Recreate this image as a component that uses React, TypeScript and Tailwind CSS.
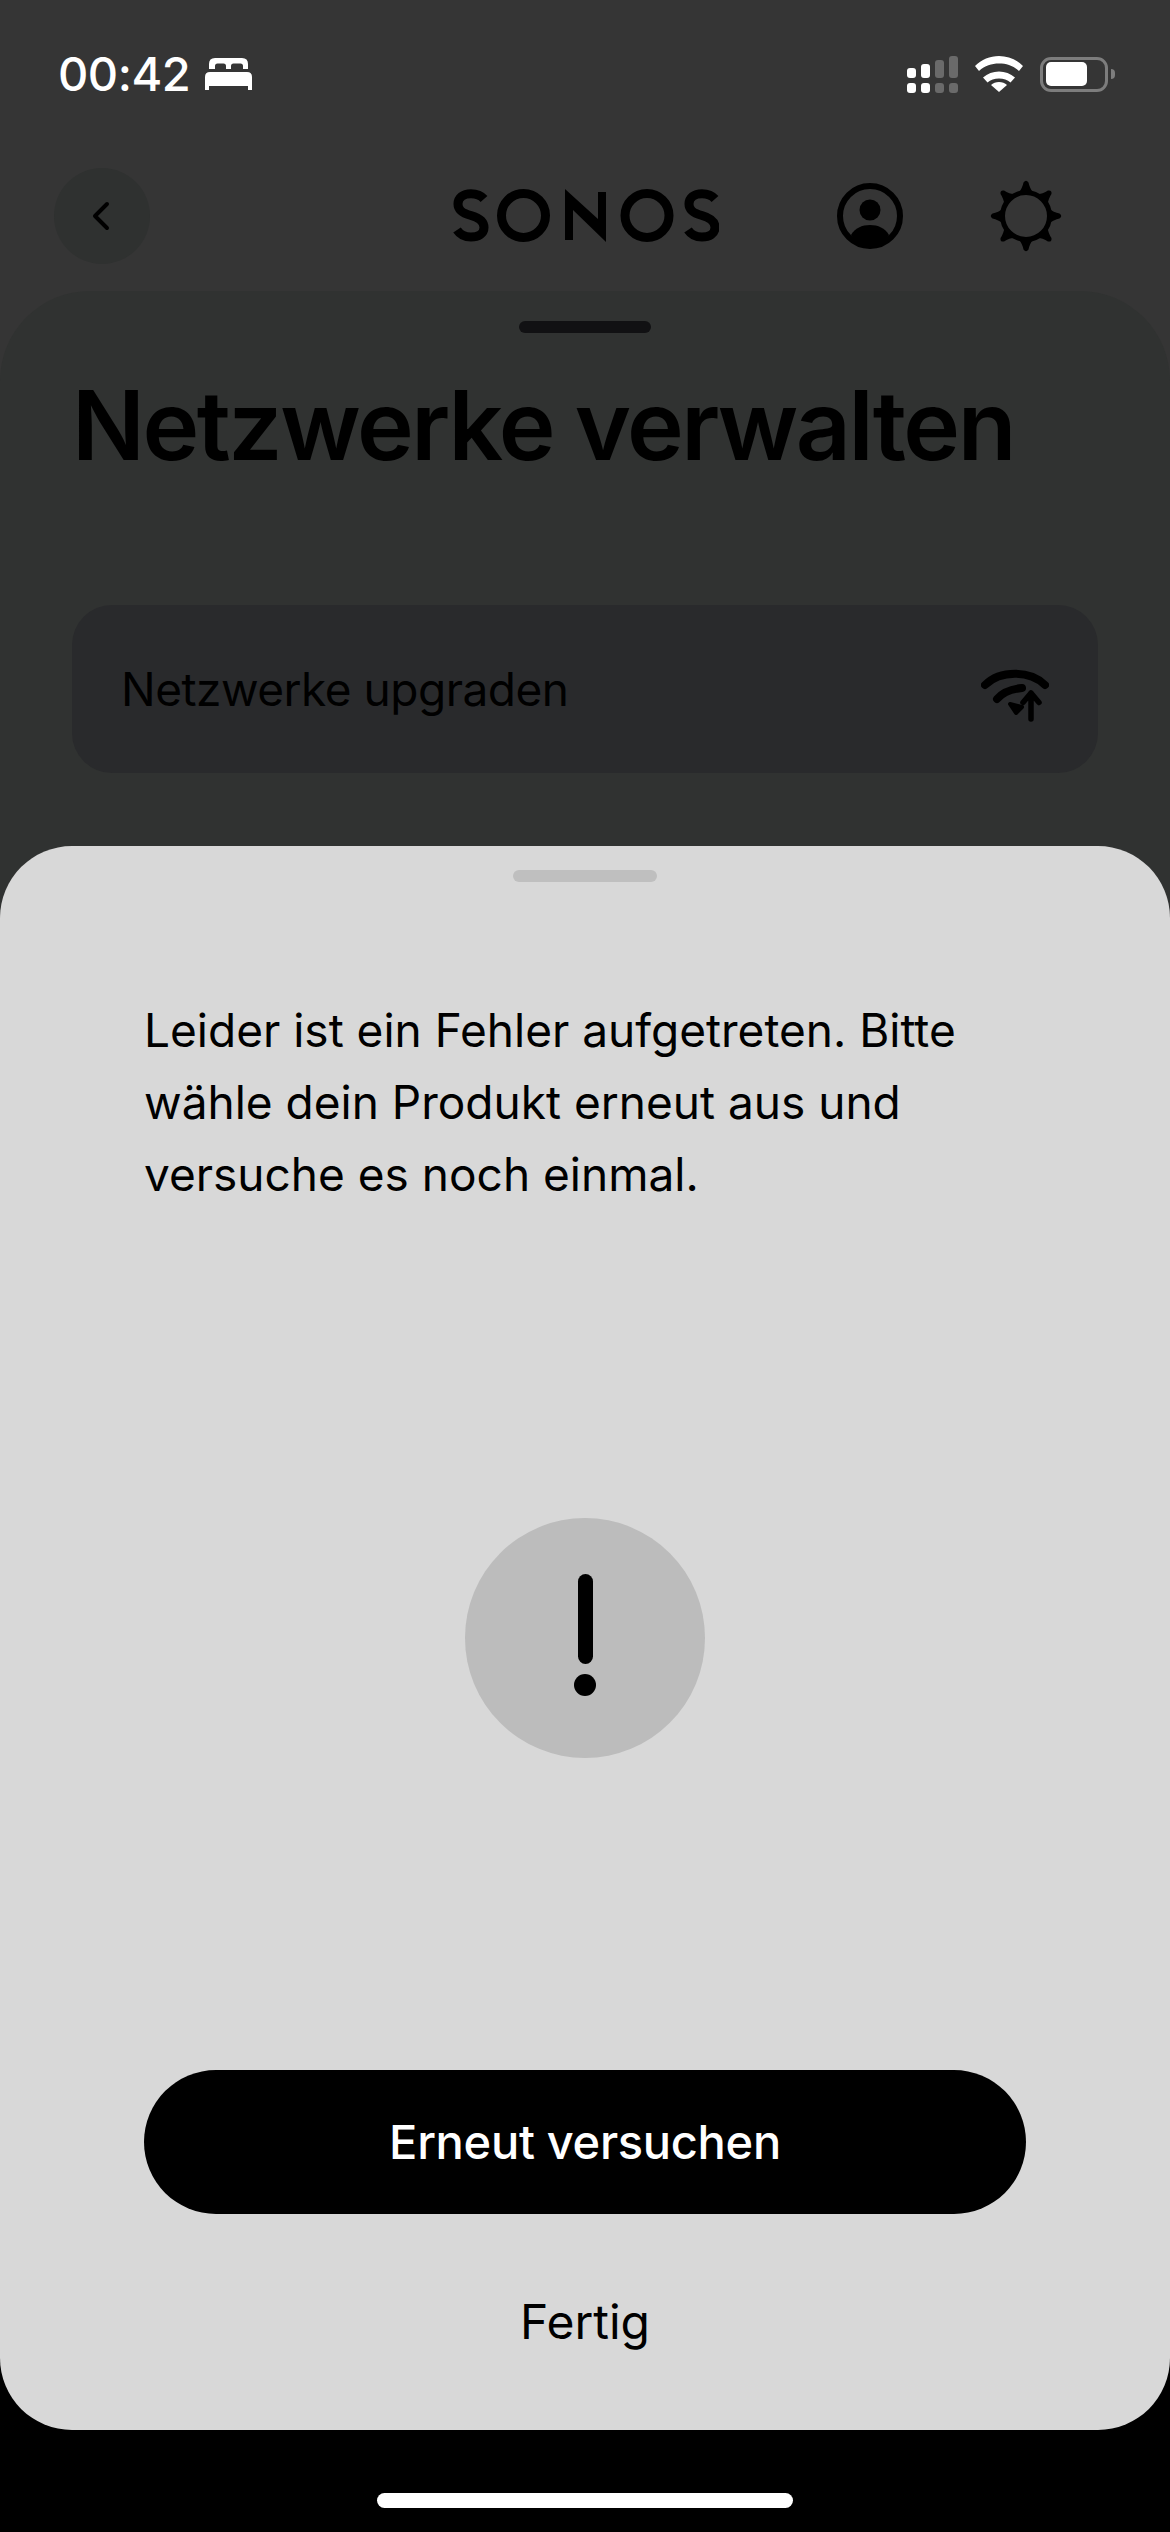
const sans = "font-['Inter',sans-serif]";

function Bed() {
  return (
    <svg width="47" height="32" viewBox="0 0 47 32" fill="#fff">
      <path d="M4 11V6q0-6 6-6h27q6 0 6 6v5h-5V8q0-2.500-2.500-2.500H28.500Q26 5.500 26 8v3h-5V8q0-2.500-2.500-2.500H12.500Q10 5.500 10 8v3z" />
      <path d="M5 14h37q5 0 5 5v13h-4v-4H4v4H0V19q0-5 5-5z" />
    </svg>
  );
}

function Signal() {
  const on = "#fff";
  const off = "#6a6a6a";
  return (
    <svg width="51" height="37" viewBox="0 0 51 37">
      <rect x="0" y="12" width="9" height="10" rx="3" fill={on} />
      <rect x="14" y="8" width="9" height="14" rx="3" fill={on} />
      <rect x="28" y="4" width="9" height="18" rx="3" fill={off} />
      <rect x="42" y="0" width="9" height="22" rx="3" fill={off} />
      <rect x="0" y="27" width="9" height="10" rx="3" fill={on} />
      <rect x="14" y="27" width="9" height="10" rx="3" fill={on} />
      <rect x="28" y="27" width="9" height="10" rx="3" fill={off} />
      <rect x="42" y="27" width="9" height="10" rx="3" fill={off} />
    </svg>
  );
}

function Wifi() {
  return (
    <svg width="48" height="36" viewBox="0 0 48 36" fill="#fff">
      <path d="M24 0C33 0 41.500 3.500 48 10L44 15C38 9.500 31.500 7.500 24 7.500S10 9.500 4 15L0 10C6.500 3.500 15 0 24 0z" />
      <path d="M24 15.500C30 15.500 35.500 17.500 40 21.500L35.500 26.500C32.500 24 28.500 22.500 24 22.500S15.500 24 12.500 26.500L8 21.500C12.500 17.500 18 15.500 24 15.500z" />
      <path d="M24 26C27 26 30 27 32 29L24 36L16 29C18 27 21 26 24 26z" />
    </svg>
  );
}

function Battery() {
  return (
    <div className="flex items-center gap-[3px]">
      <div className="flex h-[35px] w-[68px] items-center rounded-[11px] border-[3px] border-[#7d7d7d] px-[3px]">
        <div className="h-[24px] w-[41px] rounded-[5px] bg-white" />
      </div>
      <div className="h-[10px] w-[4px] rounded-r-[4px] bg-[#7d7d7d]" />
    </div>
  );
}

function Logo() {
  const s = "M33 10C30 6.500 25 4.700 20 4.700C12 4.700 7 9 7 15C7 21 11 24 20 26.500C29 29 33 32.500 33 38.500C33 44.500 27.500 48 20 48C14 48 9 45.500 6 41";
  return (
    <svg width="268" height="54" viewBox="0 0 268 54" fill="none" stroke="#000" strokeWidth="9">
      <path d={s} />
      <circle cx="72.500" cy="26.500" r="22" />
      <path d="M114 0L147 30V3H155V53L122 21V51H114Z" fill="#000" stroke="none" />
      <circle cx="196" cy="26.500" r="22" />
      <path d={s} transform="translate(231 0)" />
    </svg>
  );
}

function Profile() {
  return (
    <svg width="66" height="66" viewBox="0 0 66 66">
      <circle cx="33" cy="33" r="30" fill="none" stroke="#000" strokeWidth="6" />
      <circle cx="33" cy="27" r="10.500" fill="#000" />
      <path d="M14 52C18 45 25 42 33 42C41 42 48 45 52 52C47 60 40 64 33 64C26 64 19 60 14 52z" fill="#000" />
    </svg>
  );
}

function Sun() {
  const rays = [0, 45, 90, 135, 180, 225, 270, 315];
  return (
    <svg width="72" height="72" viewBox="0 0 72 72">
      <circle cx="36" cy="36" r="23.500" fill="none" stroke="#000" strokeWidth="5" />
      {rays.map((a) => (
        <path key={a} d="M28 14Q32.500 8 33.500 2.500Q36 -1 38.500 2.500Q39.500 8 44 14z" fill="#000" transform={`rotate(${a} 36 36)`} />
      ))}
    </svg>
  );
}

function WifiUp() {
  return (
    <svg width="68" height="54" viewBox="0 0 68 54" fill="none" stroke="#000" strokeLinecap="round" strokeLinejoin="round">
      <path d="M4 17C12 9 22 5.700 34 5.700S56 9 64 17" strokeWidth="8" />
      <path d="M16 31C22 24 31 21 41 20" strokeWidth="8" />
      <path d="M29 36L35 45L41 39C37 38 33 37 29 36z" fill="#000" strokeWidth="4" />
      <path d="M50 51V25M42 34.500l8-9.500 8 9.500" strokeWidth="5.500" />
    </svg>
  );
}

export default function App() {
  return (
    <div className={`relative h-[2532px] w-[1170px] overflow-hidden bg-black ${sans}`}>
      <div className="flex h-[1000px] flex-col bg-[#353535]">
        <div className="flex h-[168px] shrink-0 justify-between pl-[58px] pr-[55px] pt-[55px]">
          <div className="flex h-[38px] items-center gap-[15px]">
            <span className="text-[47px] font-medium leading-[38px] tracking-[-0.5px] text-white">00:42</span>
            <Bed />
          </div>
          <div className="flex h-[38px] items-center">
            <Signal />
            <div className="ml-[17px] mr-[17px]"><Wifi /></div>
            <Battery />
          </div>
        </div>
        <div className="flex h-[123px] shrink-0 items-start pl-[54px]">
          <div className="flex h-[96px] w-[96px] items-center justify-center rounded-full bg-[#2f3130]">
            <svg width="20" height="30" viewBox="0 0 20 30" fill="none" stroke="#000" strokeWidth="4" strokeLinecap="round" strokeLinejoin="round" className="mr-[3px]">
              <path d="M16 3L4 15l12 12" />
            </svg>
          </div>
          <div className="ml-[301px] mt-[21px]"><Logo /></div>
          <div className="ml-[118px] mt-[15px]"><Profile /></div>
          <div className="ml-[87px] mt-[12px]"><Sun /></div>
        </div>
        <div className="flex min-h-0 flex-1 flex-col rounded-t-[90px] bg-[#303231] px-[72px]">
          <div className="mx-auto mt-[30px] h-[12px] w-[132px] shrink-0 rounded-full bg-[#111113]" />
          <h1 className="mt-[34px] text-[96px] font-semibold leading-[116px] tracking-[-2.4px] text-black">Netzwerke verwalten</h1>
          <div className="mt-[122px] flex h-[168px] items-center justify-between rounded-[40px] bg-[#292a2c] pl-[49px] pr-[49px]">
            <span className="text-[46px] leading-[56px] tracking-[-0.5px] text-black">Netzwerke upgraden</span>
            <div className="mt-[12px]"><WifiUp /></div>
          </div>
        </div>
      </div>

      <div className="absolute left-0 top-[846px] flex h-[1584px] w-[1170px] flex-col rounded-[72px] bg-[#d8d8d8] px-[144px]">
        <div className="mx-auto mt-[24px] h-[12px] w-[144px] shrink-0 rounded-full bg-[#bfbfbf]" />
        <p className="mt-[112px] text-[46px] leading-[72px] text-black">
          Leider ist ein Fehler aufgetreten. Bitte wähle dein Produkt erneut aus und versuche es noch einmal.
        </p>
        <div className="mx-auto mt-[308px] flex h-[240px] w-[240px] shrink-0 flex-col items-center rounded-full bg-[#bcbcbc] pt-[56px]">
          <div className="h-[90px] w-[15px] rounded-full bg-black" />
          <div className="mt-[10px] h-[22px] w-[22px] rounded-full bg-black" />
        </div>
        <button className="mt-[312px] flex h-[144px] w-full shrink-0 items-center justify-center rounded-full bg-black text-[47px] font-medium leading-[56px] tracking-[-0.3px] text-white">
          Erneut versuchen
        </button>
        <div className="mt-[80px] text-center text-[48px] leading-[56px] text-black">Fertig</div>
      </div>

      <div className="absolute left-[377px] top-[2493px] h-[15px] w-[416px] rounded-full bg-white" />
    </div>
  );
}
